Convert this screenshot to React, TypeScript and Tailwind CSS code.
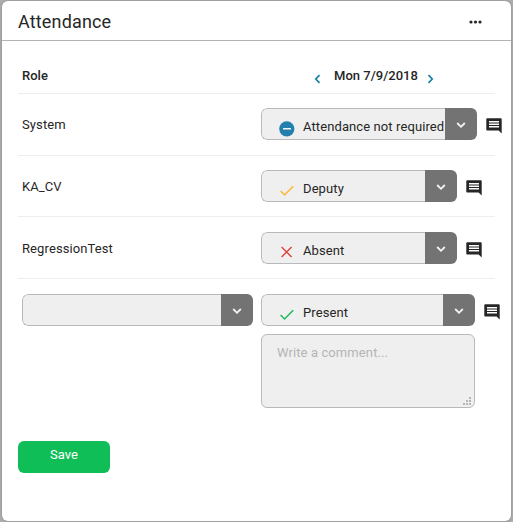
import React from 'react';

type Status = 'none' | 'deputy' | 'absent' | 'present';

function StatusIcon({ status }: { status: Status }) {
  if (status === 'none') {
    return (
      <svg width="16" height="16" viewBox="0 0 16 16">
        <circle cx="7.8" cy="7.8" r="7.6" fill="#257fad" />
        <path d="M4 7.8h8" stroke="#f3f6f8" strokeWidth="1.6" />
      </svg>
    );
  }
  if (status === 'absent') {
    return (
      <svg width="16" height="16" viewBox="0 0 16 16" fill="none" stroke="#d9433d" strokeWidth="1.4">
        <path d="M2.6 2l10 10M12.6 2L2.6 12" />
      </svg>
    );
  }
  return (
    <svg width="16" height="16" viewBox="0 0 16 16" fill="none" stroke={status === 'deputy' ? '#fdb735' : '#1dbb5a'} strokeWidth="1.5">
      <path d="M1.6 8l4 4L14.2 3.2" />
    </svg>
  );
}

function Select({ width, status, label }: { width: string; status?: Status; label?: string }) {
  return (
    <div className={`flex h-8 shrink-0 overflow-hidden rounded-md ${width}`}>
      <div className="flex min-w-0 flex-1 overflow-hidden rounded-l-md border border-r-0 border-[#b9b9b9] bg-[#efefef]">
        {status && (
          <>
            <div className="ml-[17px] mt-[12px] shrink-0">
              <StatusIcon status={status} />
            </div>
            <span className="ml-2 mt-[9px] whitespace-nowrap leading-[18px]">{label}</span>
          </>
        )}
      </div>
      <div className="flex w-8 items-center justify-center bg-[#737373] pt-[2px]">
        <svg width="10" height="8" viewBox="0 0 10 8" fill="none" stroke="#f4f4f4" strokeWidth="1.8">
          <path d="M1.2 2l3.8 3.8L8.8 2" />
        </svg>
      </div>
    </div>
  );
}

function CommentIcon() {
  return (
    <svg className="ml-2 mt-[9px] shrink-0" width="18" height="18" viewBox="0 0 18 18" fill="#262626">
      <path fillRule="evenodd" d="M2.5 1.2h13c.8 0 1.2.5 1.2 1.2v14.2L13.6 13.6H2.5c-.8 0-1.2-.5-1.2-1.2v-10c0-.7.4-1.2 1.2-1.2zM4 4v1.5h10V4zM4 6.5V8h10V6.5zM4 9v1.5h10V9z" />
    </svg>
  );
}

function Row({ name, height, top, width, status, label }: { name: string; height: string; top: string; width: string; status: Status; label: string }) {
  return (
    <div className={`flex border-b border-[#eeeeee] pl-1 ${height} ${top}`}>
      <div className="w-[239px] shrink-0 pt-2 leading-[18px]">{name}</div>
      <Select width={width} status={status} label={label} />
      <CommentIcon />
    </div>
  );
}

export default function App() {
  return (
    <div className="h-[522px] w-[513px] bg-[#adadad] pl-[2px] pt-px font-['Roboto',sans-serif] text-[13px] tracking-[0.1px] text-[#262626]">
      <div className="h-[520px] w-[509px] rounded-md bg-white shadow-[0_0_3px_#888]">
        <header className="flex h-10 items-center justify-between border-b border-[#b3b3b3] pl-4 pr-[29px]">
          <h1 className="pt-[2px] text-[18px] leading-6 tracking-[0.16px]">Attendance</h1>
          <svg className="mt-[2px]" width="13" height="4" viewBox="0 0 13 4" fill="#262626">
            <circle cx="2" cy="2" r="1.6" />
            <circle cx="6.5" cy="2" r="1.6" />
            <circle cx="11" cy="2" r="1.6" />
          </svg>
        </header>
        <main className="px-4">
          <div className="flex h-[53px] border-b border-[#eeeeee] pl-1 pt-[26px] font-medium leading-[18px] tracking-[0.02px]">
            <div className="w-[292px]">Role</div>
            <svg className="mt-[7px]" width="8" height="10" viewBox="0 0 8 10" fill="none" stroke="#1681a3" strokeWidth="1.7">
              <path d="M5.5 1.2L1.8 5l3.7 3.8" />
            </svg>
            <div className="w-[105px] whitespace-nowrap pl-3">Mon 7/9/2018</div>
            <svg className="mt-[7px]" width="8" height="10" viewBox="0 0 8 10" fill="none" stroke="#1681a3" strokeWidth="1.7">
              <path d="M1.5 1.2L5.2 5 1.5 8.8" />
            </svg>
          </div>
          <Row name="System" height="h-[62px]" top="pt-[14px]" width="w-[216px]" status="none" label="Attendance not required" />
          <Row name="KA_CV" height="h-[61px]" top="pt-[14px]" width="w-[196px]" status="deputy" label="Deputy" />
          <Row name="RegressionTest" height="h-[62px]" top="pt-[15px]" width="w-[196px]" status="absent" label="Absent" />
          <div className="flex pl-1 pt-[15px]">
            <Select width="w-[231px]" />
            <div className="ml-2 w-[214px] shrink-0">
              <Select width="w-[214px]" status="present" label="Present" />
              <div className="mt-2 flex h-[74px] justify-between rounded-md border border-[#b9b9b9] bg-[#efefef]">
                <span className="pl-[15px] pt-[9px] leading-[18px] text-[#b5b5b5]">Write a comment...</span>
                <svg className="mb-[2px] mr-[3px] self-end" width="8" height="8" viewBox="0 0 8 8" fill="#b5b5b5">
                  <path d="M6 0h2v2H6zM3 3h2v2H3zM6 3h2v2H6zM0 6h2v2H0zM3 6h2v2H3zM6 6h2v2H6z" />
                </svg>
              </div>
            </div>
            <CommentIcon />
          </div>
          <button className="mt-[33px] flex h-8 w-[92px] justify-center rounded-md bg-[#10be58] pt-[5px] leading-[18px] text-white">Save</button>
        </main>
      </div>
    </div>
  );
}
